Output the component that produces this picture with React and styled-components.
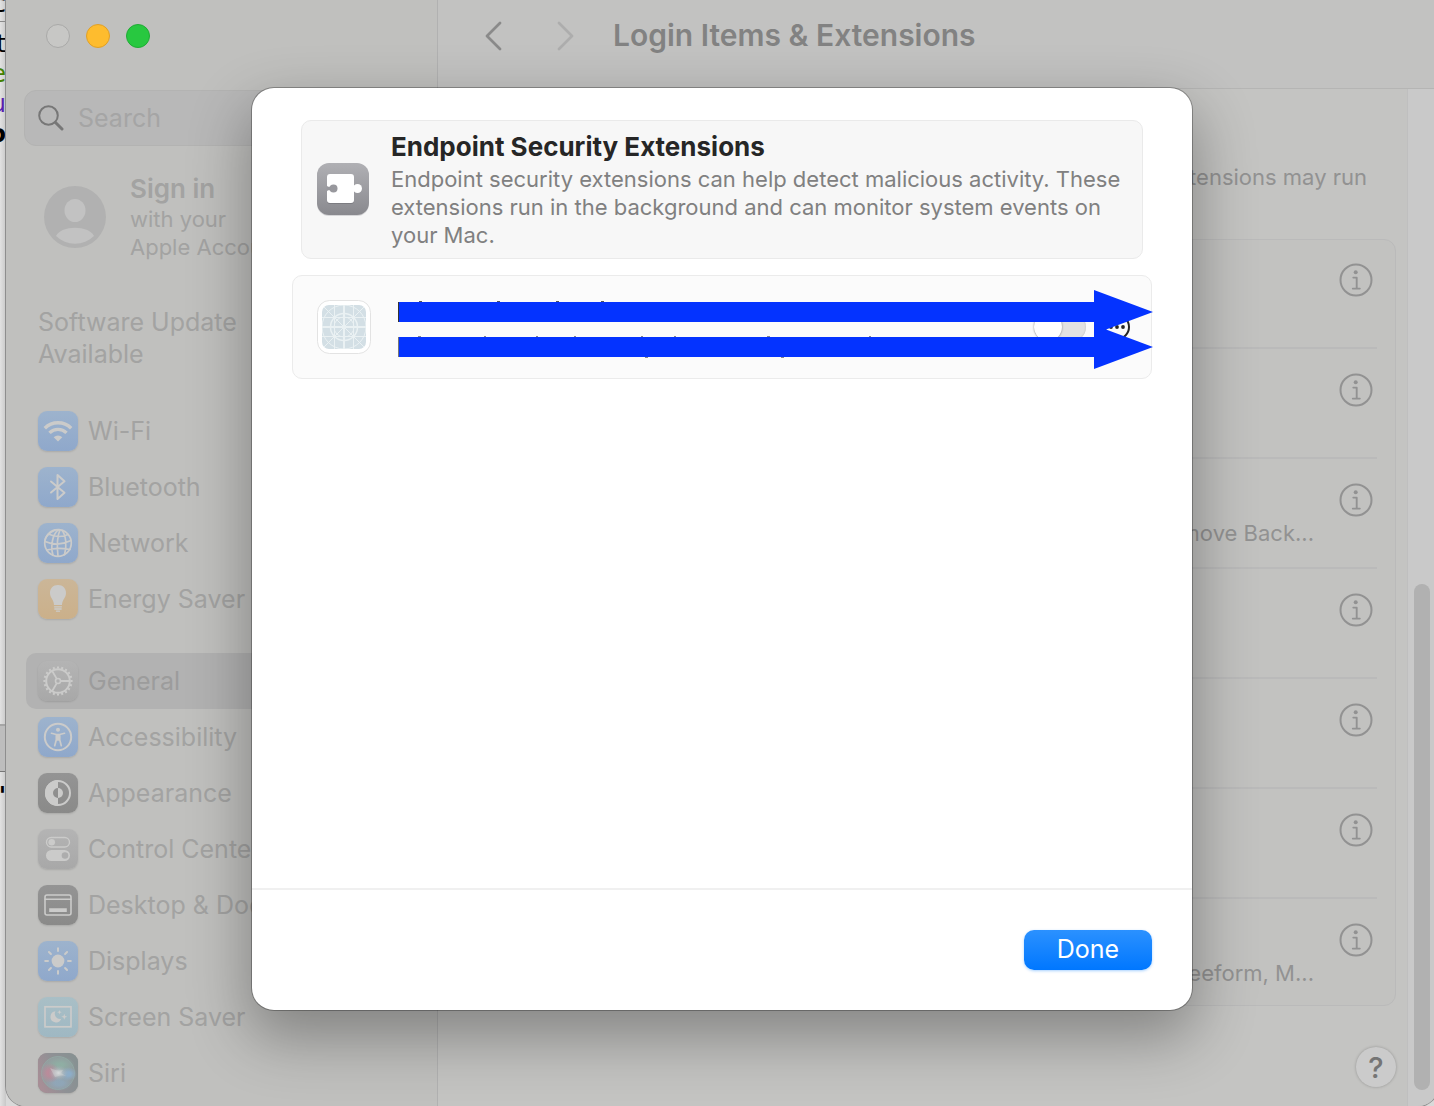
import styled, { createGlobalStyle } from 'styled-components';

const GlobalStyle = createGlobalStyle`
  * {
    box-sizing: border-box;
  }

  body {
    margin: 0;
    font-family: Inter, "Liberation Sans", sans-serif;
    color: #a3a3a2;
  }

  button {
    font-family: inherit;
    color: inherit;
    padding: 0;
    border: none;
    background: none;
  }
`;

/* ---------- desktop and window ---------- */

const Desktop = styled.div`
  position: relative;
  display: flex;
  height: 100vh;
  overflow: hidden;
  background: #d9d9d9;
`;

const BehindStrip = styled.div`
  flex: 0 0 6px;
  overflow: hidden;
  display: flex;
  flex-direction: column;
  background: linear-gradient(to right, #e2e2e2, #c8c8c8);
`;

const BehindLine = styled.div`
  display: flex;
  justify-content: flex-end;
  height: 30px;
  line-height: 30px;
  font-family: "DejaVu Sans", sans-serif;
  font-size: 24px;
  font-weight: ${(p) => (p.$bold ? 700 : 400)};
  color: ${(p) => p.$color || '#000'};
`;

const BehindTop = styled(BehindLine)`
  height: 22px;
  line-height: 8px;
  border-bottom: 1px solid #8a8a8a;
  margin-bottom: 7px;
`;

const BehindBar = styled.div`
  margin: 575px 0 9px;
  height: 48px;
  flex: none;
  border-top: 2px solid #a5a5a5;
  border-bottom: 1px solid #777;
  background: #bdbdbd;
`;

const Window = styled.div`
  position: relative;
  flex: 1;
  min-width: 0;
  display: flex;
  margin-right: -4px;
  overflow: hidden;
  border-radius: 0 0 20px 20px;
  background: #c4c4c2;
  box-shadow: 0 0 0 1px #8e8e8e;
`;

/* ---------- sidebar ---------- */

const Sidebar = styled.aside`
  flex: 0 0 432px;
  min-width: 0;
  display: flex;
  flex-direction: column;
  overflow: hidden;
  border-right: 1px solid #b1b1b1;
  background: #c0c0be;

  > * {
    flex-shrink: 0;
  }
`;

const Lights = styled.div`
  display: flex;
  gap: 16px;
  padding: 24px 40px 42px;
`;

const Light = styled.button`
  width: 24px;
  height: 24px;
  border-radius: 50%;
  background: ${(p) => p.$fill};
  border: 1px solid ${(p) => p.$edge};
`;

const SearchBox = styled.label`
  display: flex;
  align-items: center;
  gap: 14px;
  height: 56px;
  margin: 0 18px;
  padding: 0 13px;
  border: 1px solid #b3b3b2;
  border-radius: 12px;
  background: #b8b8b8;
  color: #777;
`;

const SearchInput = styled.input`
  flex: 1;
  min-width: 0;
  border: none;
  outline: none;
  padding: 0;
  background: none;
  font-family: inherit;
  font-size: 25px;

  &::placeholder {
    color: #a5a5a5;
    opacity: 1;
  }
`;

const Account = styled.div`
  display: flex;
  align-items: center;
  gap: 24px;
  padding: 27px 38px 0;
`;

const AccountName = styled.div`
  font-size: 26px;
  line-height: 32px;
  font-weight: 600;
`;

const AccountHint = styled.div`
  font-size: 22px;
  line-height: 28px;
`;

const UpdateNote = styled.p`
  width: 240px;
  margin: 45px 0 33px 32px;
  font-size: 25px;
  line-height: 32px;
`;

const NavGroup = styled.nav`
  display: flex;
  flex-direction: column;
  margin: 0 20px 26px;
`;

const NavItem = styled.a`
  display: flex;
  align-items: center;
  gap: 10px;
  height: 56px;
  flex: none;
  padding: 0 12px;
  border-radius: 10px;
  font-size: 25px;
  color: ${(p) => (p.$active ? '#9c9c9c' : '#a3a3a2')};
  background: ${(p) => (p.$active ? '#b2b2b2' : 'transparent')};
  text-decoration: none;
  white-space: nowrap;
`;

const Tile = styled.span`
  display: flex;
  width: 40px;
  height: 40px;
  border-radius: 9px;
  overflow: hidden;
  background: linear-gradient(${(p) => p.$from}, ${(p) => p.$to});
  box-shadow: 0 1px 2px rgba(0, 0, 0, 0.12);
`;

/* ---------- content ---------- */

const Content = styled.main`
  flex: 1;
  min-width: 0;
  display: flex;
  flex-direction: column;
`;

const Toolbar = styled.header`
  display: flex;
  align-items: center;
  height: 89px;
  padding: 0 45px 18px;
  flex: none;
  background: #c2c2c1;
  border-bottom: 1px solid #b5b5b4;
`;

const NavButton = styled.button`
  display: flex;
  width: 20px;
  height: 32px;
  margin-right: ${(p) => p.$after};
  color: ${(p) => p.$tone};
`;

const PageTitle = styled.h1`
  margin: 0;
  font-size: 30px;
  font-weight: 600;
  color: #828282;
`;

const Body = styled.div`
  flex: 1;
  min-height: 0;
  display: flex;
`;

const Page = styled.div`
  flex: 1;
  min-width: 0;
  padding: 72px 11px 0 42px;
`;

const Intro = styled.p`
  margin: 0 29px 46px 0;
  text-align: right;
  white-space: nowrap;
  font-size: 22px;
  line-height: 32px;
  color: #929292;
`;

const List = styled.ul`
  list-style: none;
  margin: 0;
  padding: 0 18px;
  border: 1px solid #bababa;
  border-radius: 12px;
  background: #c2c2c0;
`;

const ListRow = styled.li`
  display: flex;
  flex-direction: column;
  align-items: flex-end;
  gap: 2px;
  height: 110px;
  padding-top: 24px;

  &:first-child {
    height: 107px;
    padding-top: 23px;
  }

  & + & {
    border-top: 2px solid #bababa;
  }

  &:last-child {
    height: 108px;
  }
`;

const InfoButton = styled.button`
  display: flex;
  margin-right: 4px;
  color: #929292;
`;

const RowNote = styled.span`
  margin-right: 63px;
  font-size: 22px;
  line-height: 28px;
  color: #929292;
  white-space: nowrap;
`;

const PageFooter = styled.div`
  display: flex;
  justify-content: flex-end;
  padding-top: 41px;
`;

const HelpButton = styled.button`
  width: 40px;
  height: 40px;
  border-radius: 50%;
  background: #cbcbcb;
  box-shadow: 0 0 3px rgba(0, 0, 0, 0.25);
  font-size: 29px;
  font-weight: 500;
  color: #757575;
`;

const ScrollTrack = styled.div`
  flex: 0 0 30px;
  display: flex;
  align-items: flex-end;
  padding: 0 8px 16px 6px;
  background: #c9c9c9;
  border-left: 1px solid #bfbfbf;
`;

const ScrollThumb = styled.div`
  width: 16px;
  height: calc(50% + 6px);
  border-radius: 8px;
  background: #b1b1b1;
`;

/* ---------- sheet ---------- */

const SheetLayer = styled.div`
  position: absolute;
  inset: 0;
  display: flex;
  justify-content: center;
  padding: 88px 246px 96px;
`;

const Sheet = styled.section`
  flex: 1;
  display: flex;
  flex-direction: column;
  border-radius: 22px;
  background: #fff;
  color: #262626;
  box-shadow:
    0 0 0 1px rgba(0, 0, 0, 0.28),
    0 24px 60px 4px rgba(0, 0, 0, 0.32);
`;

const SheetBody = styled.div`
  flex: 1;
  padding: 32px 40px;
`;

const Summary = styled.div`
  display: flex;
  align-items: center;
  gap: 21px;
  margin: 0 9px 16px;
  padding: 8px 14px 9px;
  border: 1px solid #eaeaea;
  border-radius: 10px;
  background: #f7f7f7;
`;

const SummaryTitle = styled.h2`
  margin: 0;
  font-size: 26px;
  line-height: 36px;
  font-weight: 700;
`;

const SummaryText = styled.p`
  margin: 0;
  font-size: 22px;
  line-height: 28px;
  color: #808080;
`;

const ExtensionRow = styled.div`
  position: relative;
  display: flex;
  align-items: center;
  height: 104px;
  padding: 0 21px 0 24px;
  border: 1px solid #ebebeb;
  border-radius: 10px;
  background: #fbfbfb;
`;

const Switch = styled.input`
  appearance: none;
  width: 52px;
  height: 30px;
  margin: 0 18px 0 auto;
  border-radius: 15px;
  background: #e2e2e2;
  box-shadow: inset 0 0 2px rgba(0, 0, 0, 0.2);

  &::before {
    content: "";
    display: block;
    width: 28px;
    height: 28px;
    margin: 1px 0;
    border-radius: 50%;
    background: #fff;
    box-shadow: 0 0 2px rgba(0, 0, 0, 0.5);
  }
`;

const MoreButton = styled.button`
  display: flex;
  color: #262626;
`;

/* arrows drawn over the extension's name and vendor */
const Redaction = styled.div`
  position: absolute;
  top: 14px;
  left: 105px;
  right: -2px;

  > svg {
    position: absolute;
    top: 0;
    left: 0;
  }
`;

const Arrow = styled.div`
  display: flex;
  align-items: center;
  height: 44px;

  & + & {
    margin-top: -9px;
  }
`;

const ArrowShaft = styled.div`
  flex: 1;
  height: 20px;
  border-left: 1px solid ${(p) => p.$edge};
  background: #0433ff;
`;

const ArrowHead = styled.div`
  width: 59px;
  height: 44px;
  background: #0433ff;
  clip-path: polygon(0 0, 100% 50%, 0 100%);
`;

const SheetFooter = styled.footer`
  display: flex;
  justify-content: flex-end;
  padding: 40px;
  border-top: 2px solid #f0f0f0;
`;

const DoneButton = styled.button`
  width: 128px;
  height: 40px;
  border-radius: 10px;
  background: linear-gradient(#2b91ff, #0077ff);
  box-shadow: 0 1px 3px rgba(0, 122, 255, 0.35);
  font-size: 25px;
  line-height: 36px;
  padding-bottom: 2px;
  color: #fff;
`;

/* ---------- drawings ---------- */

const Glyph = ({ children }) => (
  <svg width="40" height="40" viewBox="0 0 40 40" fill="none" stroke="#cbcbca" strokeWidth="2" strokeLinecap="round" strokeLinejoin="round">
    {children}
  </svg>
);

const spokes = (n, r1, r2) =>
  Array.from({ length: n }, (_, i) => {
    const a = (i * 2 * Math.PI) / n;
    return `M${20 + r1 * Math.cos(a)} ${20 + r1 * Math.sin(a)}L${20 + r2 * Math.cos(a)} ${20 + r2 * Math.sin(a)}`;
  }).join('');

const glyphs = {
  wifi: (
    <Glyph>
      <g strokeWidth="3.4" strokeLinecap="butt">
        <path d="M6.800 17.200a18.600 18.600 0 0 1 26.400 0" />
        <path d="M11.500 21.900a12 12 0 0 1 17 0" />
      </g>
      <path d="M20 30.500l-4.300-4.200a6.100 6.100 0 0 1 8.600 0z" fill="#cbcbca" stroke="none" />
    </Glyph>
  ),
  bluetooth: (
    <Glyph>
      <path d="M13 14.500l13.500 11.200L19.500 32V8l7 6.300L13 25.500" />
    </Glyph>
  ),
  network: (
    <Glyph>
      <g strokeWidth="1.700">
        <circle cx="20" cy="20" r="13.300" />
        <path d="M20.500 6.700C15 11 12 22 15 32.300M22 6.700C19 14 19 25 20 33M24 7.300c4 5 5 15 2.500 24.500M17 7C11 10 7.500 14 7.200 17M10.500 11c6 3 14 3.500 19.500.5M7 18.500c8 3.500 18 3 26-1M9 27c7-2 15-2 23-.5" />
      </g>
    </Glyph>
  ),
  bulb: (
    <Glyph>
      <path d="M20 6c-5 0-8 3.500-8 8 0 5 3.800 6.500 4 12h8c.2-5.500 4-7 4-12 0-4.500-3-8-8-8z" fill="#cbcbca" stroke="none" />
      <path d="M16.500 27.800h7M16.800 30h6.400M18.500 32.200h3" strokeWidth="1.300" />
    </Glyph>
  ),
  gear: (
    <Glyph>
      <circle cx="20" cy="20" r="11.800" />
      <path d={spokes(20, 12.5, 14.6)} strokeWidth="2" strokeLinecap="butt" />
      <circle cx="20" cy="20" r="2.500" strokeWidth="1.600" />
      <path d={spokes(3, 3, 11)} strokeWidth="1.800" />
    </Glyph>
  ),
  accessibility: (
    <Glyph>
      <circle cx="20" cy="20" r="13.200" />
      <circle cx="20" cy="12.700" r="2" fill="#cbcbca" stroke="none" />
      <path d="M13.500 16.300l4.800 1.200h3.400l4.800-1.200M18.300 17.700v5l-1.600 6M21.700 17.700v5l1.600 6" strokeWidth="1.700" />
      <path d="M18 17.500h4v6.300h-4z" fill="#cbcbca" stroke="none" />
    </Glyph>
  ),
  appearance: (
    <Glyph>
      <circle cx="20" cy="20" r="12" />
      <path d="M20 7a13 13 0 0 0 0 26v-8a5 5 0 0 1 0-10z" fill="#cbcbca" stroke="none" />
      <path d="M20 15a5 5 0 0 1 0 10z" fill="#cbcbca" stroke="none" />
    </Glyph>
  ),
  control: (
    <Glyph>
      <rect x="8.500" y="8.500" width="23" height="9.500" rx="4.700" strokeWidth="1.400" />
      <circle cx="13.700" cy="13.200" r="3.300" fill="#cbcbca" stroke="none" />
      <rect x="8" y="21" width="24" height="11" rx="5.500" fill="#cbcbca" stroke="none" />
      <circle cx="27" cy="26.500" r="3.300" fill="#adadad" stroke="none" />
    </Glyph>
  ),
  dock: (
    <Glyph>
      <rect x="7" y="10" width="26" height="20" rx="2" strokeWidth="1.600" />
      <path d="M7 14.200h26" strokeWidth="1.400" />
      <path d="M11.200 23.200h17.600v3.800H11.200z" fill="#cbcbca" stroke="none" />
    </Glyph>
  ),
  sun: (
    <Glyph>
      <circle cx="20" cy="20" r="6.400" fill="#cbcbca" stroke="none" />
      <path d={spokes(8, 10, 12.8)} />
    </Glyph>
  ),
  screensaver: (
    <Glyph>
      <rect x="7" y="9.800" width="26" height="20" strokeWidth="1.700" strokeLinejoin="miter" />
      <path d="M17.500 14.200a5.600 5.600 0 1 0 5.800 7.600 5.200 5.200 0 0 1-5.800-7.600z" fill="#cbcbca" stroke="none" />
      <path d="M21.500 13l.6 1.600 1.600.6-1.600.6-.6 1.600-.6-1.600-1.600-.6 1.600-.6zM26.300 16.800l.8 2.200 2.200.8-2.200.8-.8 2.200-.8-2.200-2.200-.8 2.200-.8z" fill="#cbcbca" stroke="none" />
    </Glyph>
  ),
  siri: (
    <svg width="40" height="40" viewBox="0 0 40 40">
      <defs>
        <linearGradient id="siriBase" x1="0" x2="1" y1="0.700" y2="0.300">
          <stop offset="0" stopColor="#a88e96" />
          <stop offset="0.500" stopColor="#8f9195" />
          <stop offset="1" stopColor="#879192" />
        </linearGradient>
        <radialGradient id="siriGlow">
          <stop offset="0" stopColor="#d8dbdc" />
          <stop offset="0.400" stopColor="#b9c2c6" stopOpacity="0.700" />
          <stop offset="1" stopColor="#9aa8ae" stopOpacity="0" />
        </radialGradient>
        <radialGradient id="siriPink">
          <stop offset="0.300" stopColor="#bd8a9a" stopOpacity="0.900" />
          <stop offset="1" stopColor="#bd8a9a" stopOpacity="0" />
        </radialGradient>
        <radialGradient id="siriBlue">
          <stop offset="0.300" stopColor="#8dadc8" />
          <stop offset="1" stopColor="#8dadc8" stopOpacity="0" />
        </radialGradient>
        <radialGradient id="siriGreen">
          <stop offset="0.200" stopColor="#8fb0a4" stopOpacity="0.900" />
          <stop offset="1" stopColor="#8fb0a4" stopOpacity="0" />
        </radialGradient>
      </defs>
      <rect width="40" height="40" fill="url(#siriBase)" />
      <circle cx="20" cy="20" r="16.500" fill="#949fa2" fillOpacity="0.700" stroke="#93aaa4" strokeWidth="0.800" />
      <ellipse cx="22" cy="12" rx="15" ry="9" fill="url(#siriGreen)" />
      <ellipse cx="21" cy="30" rx="14" ry="8" fill="url(#siriBlue)" fillOpacity="0.600" />
      <circle cx="12" cy="20" r="10" fill="url(#siriPink)" />
      <ellipse cx="30" cy="21" rx="9" ry="7" fill="url(#siriBlue)" />
      <ellipse cx="20.500" cy="20" rx="10" ry="8" fill="url(#siriGlow)" />
      <path d="M12 15c5 2 7 3 13 2l-2 3 5 3c-5-1-7 0-11 1z" fill="#d6d9d9" fillOpacity="0.400" />
    </svg>
  ),
};

const SearchIcon = () => (
  <svg width="26" height="26" viewBox="0 0 26 26" fill="none" stroke="currentColor" strokeLinecap="round">
    <circle cx="10.500" cy="10.500" r="9.300" strokeWidth="2" />
    <path d="M17.500 17.500l6.500 6.500" strokeWidth="3" />
  </svg>
);

const Avatar = () => (
  <svg width="62" height="62" viewBox="0 0 62 62">
    <circle cx="31" cy="31" r="31" fill="#b1b1b1" />
    <ellipse cx="31" cy="24.500" rx="10.500" ry="11.500" fill="#c2c2c2" />
    <path d="M12 50c5-11 33-11 38 0a27 27 0 0 1-38 0z" fill="#c2c2c2" />
  </svg>
);

const Chevron = ({ d }) => (
  <svg width="20" height="32" viewBox="0 0 20 32" fill="none" stroke="currentColor" strokeWidth="2.800" strokeLinecap="round" strokeLinejoin="round">
    <path d={d} />
  </svg>
);

const InfoIcon = () => (
  <svg width="34" height="34" viewBox="0 0 34 34" fill="none" stroke="currentColor" strokeLinecap="round" strokeLinejoin="round">
    <circle cx="17" cy="17" r="15.500" strokeWidth="2" />
    <circle cx="16.700" cy="9.200" r="2" fill="currentColor" stroke="none" />
    <path d="M14.300 14.600h3.400v10.800M13.800 25.600h7" strokeWidth="1.900" />
  </svg>
);

const PuzzleIcon = () => (
  <svg width="54" height="54" viewBox="0 0 54 54" style={{ flex: 'none' }}>
    <defs>
      <linearGradient id="puzzleBg" x2="0" y2="1">
        <stop offset="0" stopColor="#b0b0b4" />
        <stop offset="1" stopColor="#89898e" />
      </linearGradient>
    </defs>
    <rect x="1" y="2" width="52" height="52" rx="12" fill="#d6d6d8" />
    <rect x="1" y="1" width="52" height="52" rx="12" fill="url(#puzzleBg)" />
    <rect x="11" y="13" width="27" height="29" rx="3" fill="#7c7c81" />
    <g fill="#fff">
      <rect x="11" y="12" width="27" height="29" rx="3" />
      <circle cx="41.500" cy="26.500" r="4.500" />
      <path d="M37.500 23c.5 1.200 1.500 1.400 2.500 1v5c-1-.4-2-.2-2.500 1z" />
    </g>
    <g fill="#98989d">
      <circle cx="17.500" cy="26.500" r="4" />
      <path d="M10.800 23.500c.6 1.200 1.700 1.500 4 1.200v3.600c-2.300-.3-3.400 0-4 1.200z" />
    </g>
  </svg>
);

const GridIcon = () => (
  <svg width="54" height="54" viewBox="0 0 54 54" style={{ flex: 'none' }}>
    <defs>
      <clipPath id="gridClip">
        <rect x="5" y="5" width="44" height="44" rx="7" />
      </clipPath>
    </defs>
    <rect x="0.500" y="0.500" width="53" height="53" rx="12" fill="#fff" stroke="#e3e3e3" />
    <g clipPath="url(#gridClip)" fill="none" stroke="#eaf1f3">
      <rect x="5" y="5" width="44" height="44" fill="#d3dfe5" stroke="none" />
      <path d="M5 5l44 44M49 5L5 49M17.500 5v44M36.500 5v44M5 17.500h44M5 36.500h44" />
      <path d="M27 5v44M5 27h44" strokeWidth="2" />
      <circle cx="27" cy="27" r="22" />
      <circle cx="27" cy="27" r="13.500" strokeWidth="1.500" />
      <circle cx="27" cy="27" r="10" />
    </g>
  </svg>
);

const MoreIcon = () => (
  <svg width="26" height="26" viewBox="0 0 26 26" fill="currentColor">
    <circle cx="13" cy="13" r="12" fill="none" stroke="currentColor" strokeWidth="2" />
    <circle cx="7" cy="13" r="1.900" />
    <circle cx="13" cy="13" r="1.900" />
    <circle cx="19" cy="13" r="1.900" />
  </svg>
);

/* bits of ink that stick out above and below the arrows */
const InkTicks = () => (
  <svg width="480" height="70" viewBox="0 0 480 70" fill="none" strokeWidth="1">
    <path d="M21 11.500h3M99 11.500h3M158 11.500h3M203 11.500h3" stroke="#555" />
    <path d="M20 46.500h3M86 46.500h2M138 46.500h2M176 46.500h2M243 46.500h2M276 46.500h2M369 46.500h3M471 46.500h2M247 67.500h3M383 67.500h3" stroke="#888" />
  </svg>
);

const BLUE = ['#9db3cd', '#8fa8cb'];
const GRAY = ['#b4b4b4', '#a8a8a8'];
const DARK = ['#949494', '#8a8a89'];

const mainItems = [
  { label: 'Wi-Fi', icon: 'wifi', tile: BLUE },
  { label: 'Bluetooth', icon: 'bluetooth', tile: BLUE },
  { label: 'Network', icon: 'network', tile: BLUE },
  { label: 'Energy Saver', icon: 'bulb', tile: ['#cbb698', '#cbb08a'] },
];

const systemItems = [
  { label: 'General', icon: 'gear', tile: GRAY, active: true },
  { label: 'Accessibility', icon: 'accessibility', tile: BLUE },
  { label: 'Appearance', icon: 'appearance', tile: DARK },
  { label: 'Control Center', icon: 'control', tile: GRAY },
  { label: 'Desktop & Dock', icon: 'dock', tile: DARK },
  { label: 'Displays', icon: 'sun', tile: BLUE },
  { label: 'Screen Saver', icon: 'screensaver', tile: ['#a9bfc6', '#9fb8c3'] },
  { label: 'Siri', icon: 'siri', tile: DARK },
];

const rowNotes = ['', '', 'Remove Back...', '', '', '', 'Freeform, M...'];

const NavList = ({ items }) => (
  <NavGroup>
    {items.map((item) => (
      <NavItem key={item.label} href="#" $active={item.active}>
        <Tile $from={item.tile[0]} $to={item.tile[1]}>{glyphs[item.icon]}</Tile>
        {item.label}
      </NavItem>
    ))}
  </NavGroup>
);

function App() {
  return (
    <Desktop>
      <GlobalStyle />
      <BehindStrip>
        <BehindTop>c</BehindTop>
        <BehindLine>t</BehindLine>
        <BehindLine $color="#448000">e</BehindLine>
        <BehindLine $color="#5a1fb0">u</BehindLine>
        <BehindLine $bold>o</BehindLine>
        <BehindBar />
        <BehindLine $bold>'</BehindLine>
      </BehindStrip>

      <Window>
        <Sidebar>
          <Lights>
            <Light aria-label="Close" $fill="#c7c7c5" $edge="#a9a9a8" />
            <Light aria-label="Minimize" $fill="#febc2e" $edge="#e0a028" />
            <Light aria-label="Zoom" $fill="#28c840" $edge="#20ab35" />
          </Lights>
          <SearchBox>
            <SearchIcon />
            <SearchInput type="text" placeholder="Search" aria-label="Search" />
          </SearchBox>
          <Account>
            <Avatar />
            <div>
              <AccountName>Sign in</AccountName>
              <AccountHint>with your<br />Apple Account</AccountHint>
            </div>
          </Account>
          <UpdateNote>Software Update Available</UpdateNote>
          <NavList items={mainItems} />
          <NavList items={systemItems} />
        </Sidebar>

        <Content>
          <Toolbar>
            <NavButton aria-label="Back" $tone="#8a8a8a" $after="52px"><Chevron d="M17 4L4 17l13 13" /></NavButton>
            <NavButton aria-label="Forward" $tone="#adadad" $after="38px"><Chevron d="M4 4l13 13L4 30" /></NavButton>
            <PageTitle>Login Items &amp; Extensions</PageTitle>
          </Toolbar>
          <Body>
            <Page>
              <Intro>extensions may run</Intro>
              <List>
                {rowNotes.map((note, i) => (
                  <ListRow key={i}>
                    <InfoButton aria-label="Details"><InfoIcon /></InfoButton>
                    {note && <RowNote>{note}</RowNote>}
                  </ListRow>
                ))}
              </List>
              <PageFooter>
                <HelpButton aria-label="Help">?</HelpButton>
              </PageFooter>
            </Page>
            <ScrollTrack><ScrollThumb /></ScrollTrack>
          </Body>
        </Content>

        <SheetLayer>
          <Sheet role="dialog" aria-labelledby="sheet-title">
            <SheetBody>
              <Summary>
                <PuzzleIcon />
                <div>
                  <SummaryTitle id="sheet-title">Endpoint Security Extensions</SummaryTitle>
                  <SummaryText>
                    Endpoint security extensions can help detect malicious activity. These
                    extensions run in the background and can monitor system events on your Mac.
                  </SummaryText>
                </div>
              </Summary>
              <ExtensionRow>
                <GridIcon />
                <Switch type="checkbox" aria-label="Enable extension" />
                <MoreButton aria-label="More"><MoreIcon /></MoreButton>
                <Redaction>
                  <InkTicks />
                  <Arrow><ArrowShaft $edge="#333" /><ArrowHead /></Arrow>
                  <Arrow><ArrowShaft $edge="#777" /><ArrowHead /></Arrow>
                </Redaction>
              </ExtensionRow>
            </SheetBody>
            <SheetFooter>
              <DoneButton>Done</DoneButton>
            </SheetFooter>
          </Sheet>
        </SheetLayer>
      </Window>
    </Desktop>
  );
}

export default App;
